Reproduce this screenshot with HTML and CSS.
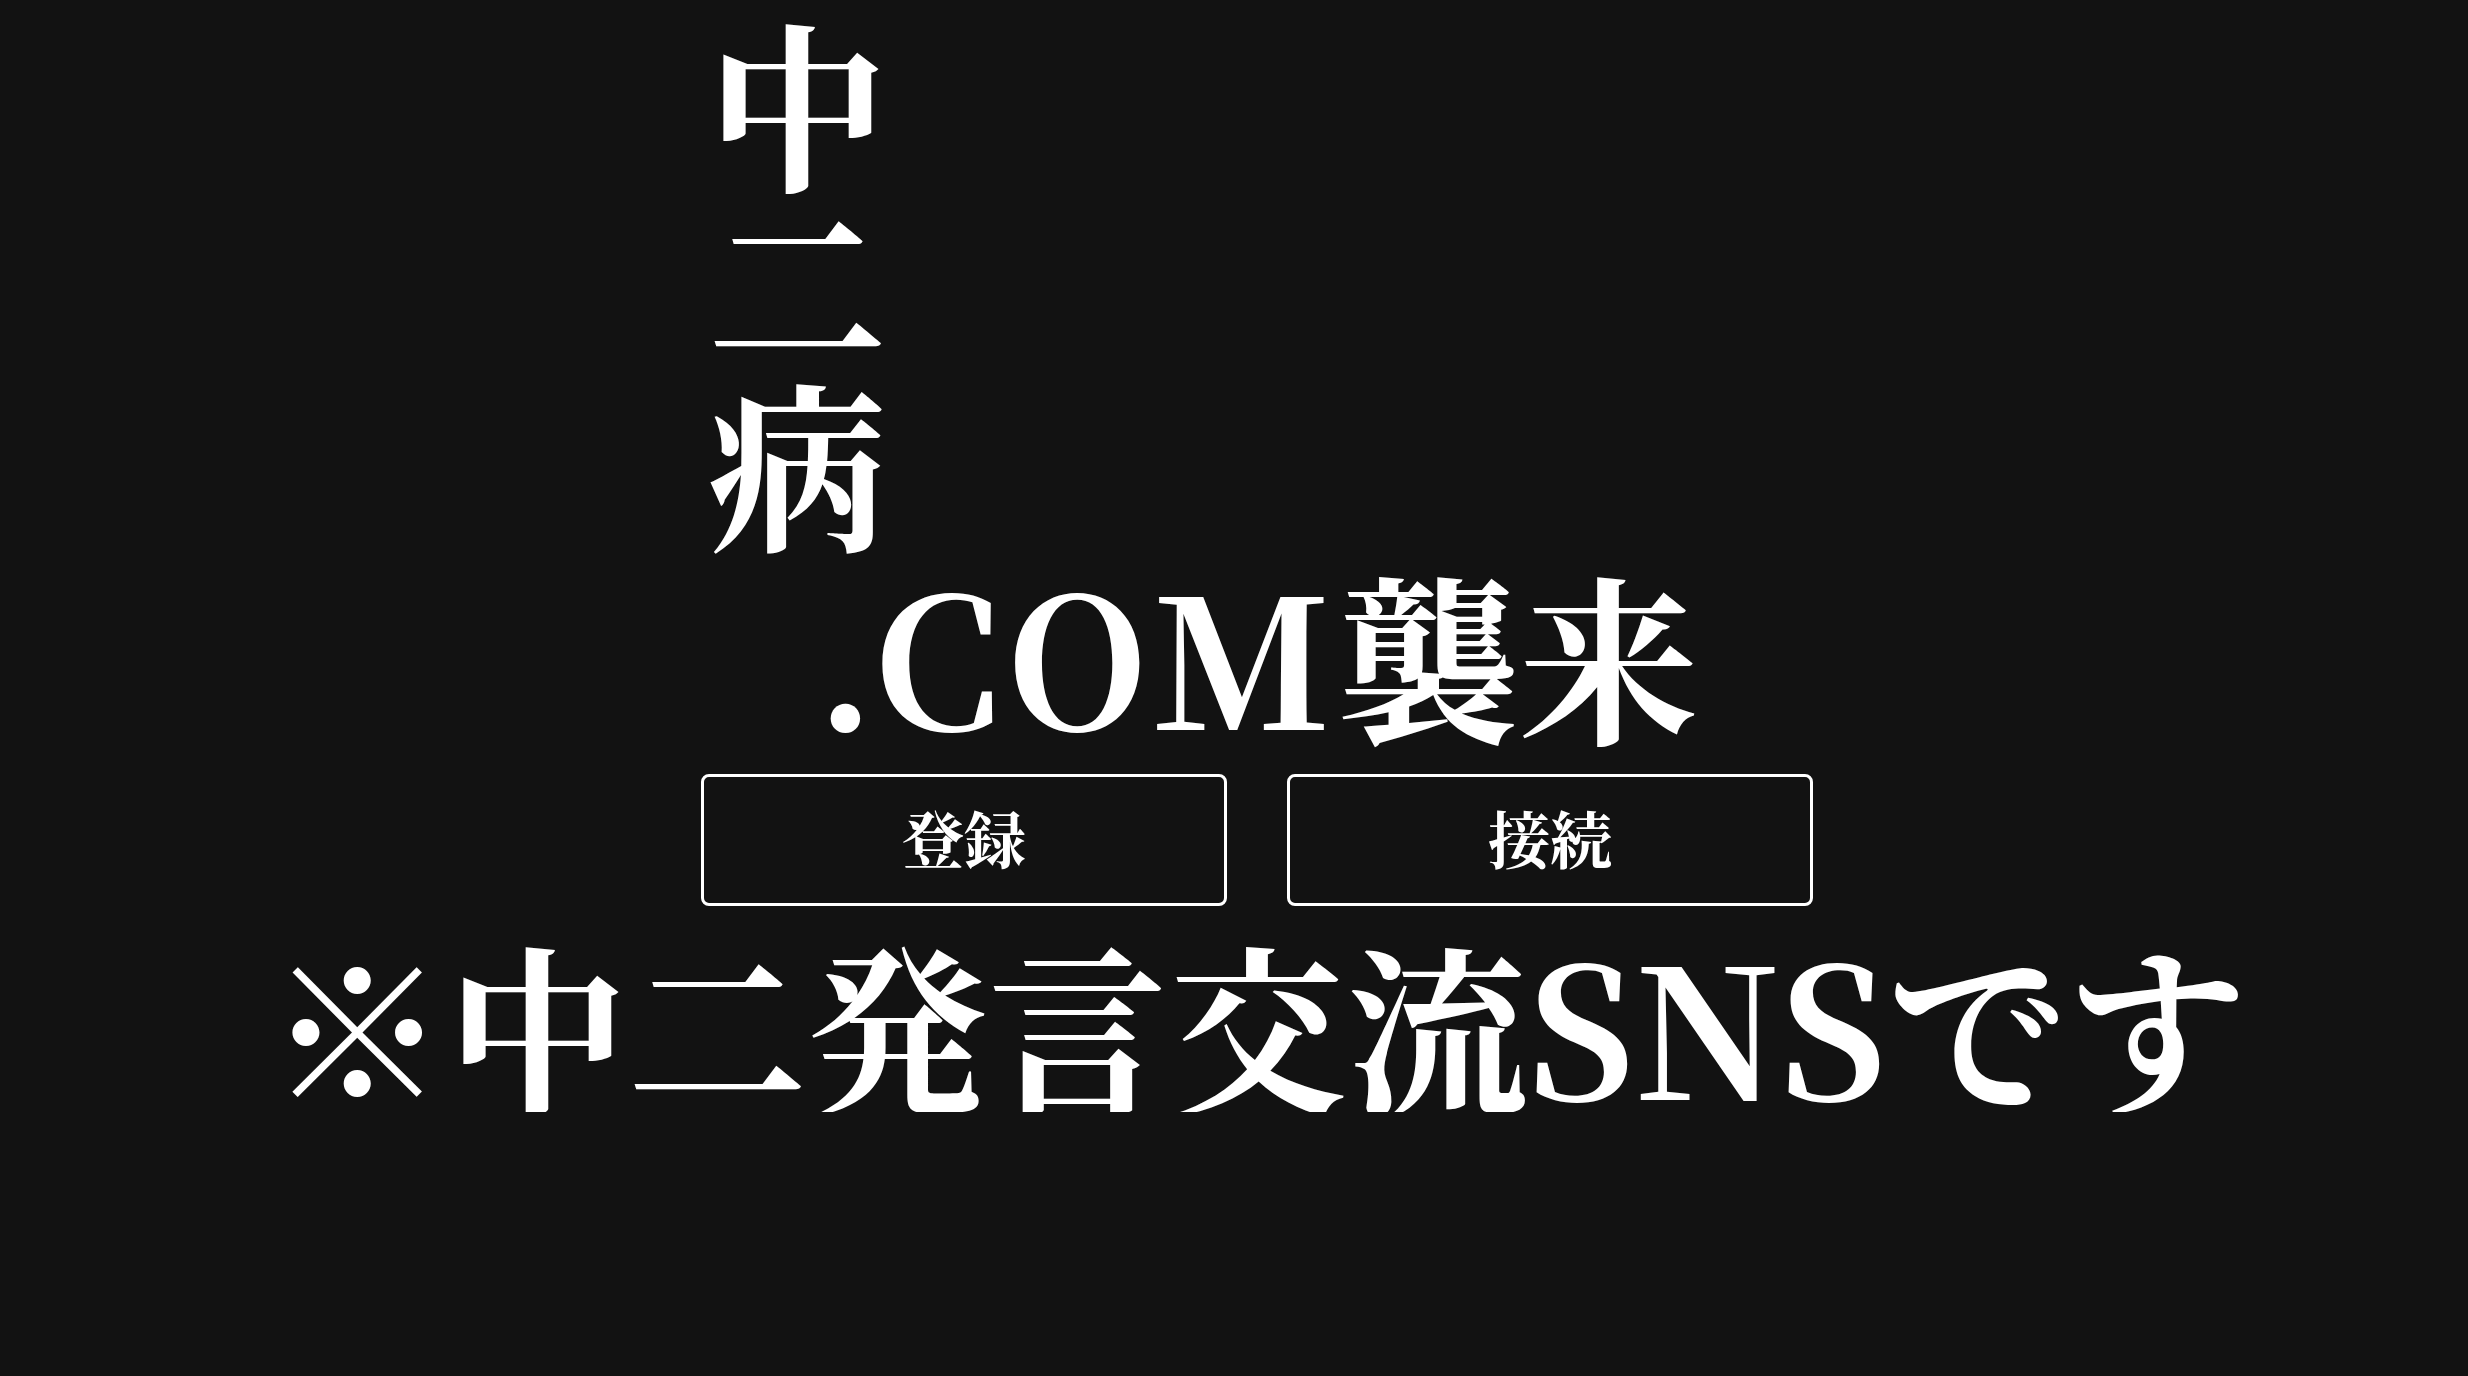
FILE: index.html
```html
<!DOCTYPE html>
<html lang="ja">
<head>
<meta charset="utf-8">
<title>中二病.COM襲来</title>
<link rel="stylesheet" href="styles.css">
</head>
<body>
<main class="page">
  <h1 class="title">
    <span class="title-v">中二病</span>
    <span class="title-h"><span class="title-latin">.COM</span>襲来</span>
  </h1>
  <div class="actions">
    <button class="btn" type="button">登録</button>
    <button class="btn" type="button">接続</button>
  </div>
  <p class="tagline">※中二発言交流SNSです</p>
</main>
</body>
</html>
```
FILE: styles.css
```css
html, body {
  margin: 0;
  padding: 0;
  background: #121212;
}
body {
  color: #ffffff;
  font-family: "Noto Serif CJK JP", "Noto Serif JP", "IPAMincho", "Noto Sans CJK JP", serif;
}
.page {
  display: flex;
  flex-direction: column;
  align-items: center;
  padding: 19px 0 0 46px;
}
.title {
  margin: 0;
  font-weight: 700;
  font-size: 180px;
  line-height: 1;
  display: flex;
  flex-direction: column;
  align-items: flex-start;
}
.title-v {
  writing-mode: vertical-rl;
  line-height: 1;
  margin-left: -108px;
}
.title-h {
  display: block;
  margin-top: 3px;
  white-space: nowrap;
}
.title-latin {
  letter-spacing: 7px;
}
.actions {
  display: flex;
  gap: 60px;
  margin-top: 32px;
}
.btn {
  width: 526px;
  height: 132px;
  background: transparent;
  color: #ffffff;
  border: 3px solid #ffffff;
  border-radius: 8px;
  font-family: inherit;
  font-weight: 700;
  font-size: 62px;
  line-height: 1;
  padding: 0 0 4px;
}
.tagline {
  margin: 26px 0 0;
  font-size: 180px;
  font-weight: 700;
  line-height: 1;
  white-space: nowrap;
}
```
